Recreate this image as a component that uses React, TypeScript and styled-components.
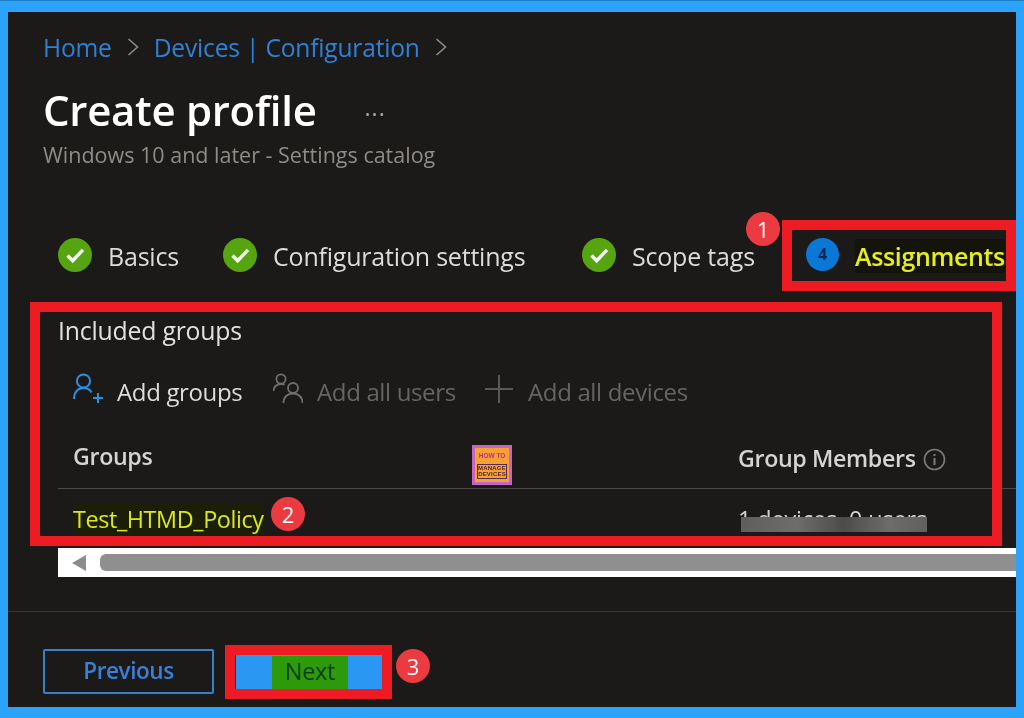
import React from "react";
import styled, { createGlobalStyle } from "styled-components";

const Global = createGlobalStyle`
  html, body { margin: 0; padding: 0; background: #2ba3fa; }
  #root { width: 1024px; height: 718px; overflow: hidden; }
  *, *::before, *::after { box-sizing: border-box; }
`;

const Frame = styled.div`
  width: 1024px;
  height: 718px;
  padding: 11px 8px 11px 8px;
  background: #2ba3fa;
  border-top: 1px solid #1d7fc4;
  font-family: "Open Sans", "Noto Sans", sans-serif;
  overflow: hidden;
  filter: blur(0.35px);
`;

const Panel = styled.main`
  height: 100%;
  background: #1b1a19;
  display: flex;
  flex-direction: column;
  overflow: hidden;
`;

const Header = styled.header`
  padding: 20px 0 0 35px;
  display: flex;
  flex-direction: column;
`;

const Breadcrumb = styled.nav`
  display: flex;
  align-items: center;
  height: 30px;
  font-size: 24.6px;
  color: #2f80d8;
  gap: 14px;
`;

const Crumb = styled.span`
  letter-spacing: -0.2px;
  white-space: nowrap;
`;

const Chevron = styled.svg`
  width: 12px;
  height: 18px;
  fill: none;
  stroke: #8c8a88;
  stroke-width: 1.6;
  margin: 0 1px;
`;

const TitleRow = styled.div`
  display: flex;
  align-items: center;
  height: 50px;
  margin-top: 23px;
`;

const Title = styled.h1`
  margin: 0;
  font-size: 42px;
  font-weight: 600;
  color: #fff;
  line-height: 50px;
  letter-spacing: -0.3px;
  white-space: nowrap;
`;

const More = styled.span`
  margin-left: 48px;
  margin-bottom: 6px;
  color: #a8a6a4;
  font-size: 23px;
  line-height: 20px;
  letter-spacing: 1px;
`;

const Subtitle = styled.p`
  margin: 5px 0 0;
  height: 30px;
  line-height: 30px;
  font-size: 21.5px;
  color: #8f8b87;
  white-space: nowrap;
`;

const Steps = styled.ol`
  list-style: none;
  margin: 66px 0 0;
  padding: 0 0 0 50px;
  height: 40px;
  display: flex;
  align-items: center;
`;

const Step = styled.li<{ $width: number }>`
  display: flex;
  align-items: center;
  width: ${(p) => p.$width}px;
  gap: 16px;
  font-size: 25px;
  line-height: 34px;
  color: #dedcda;
  letter-spacing: -0.2px;
  white-space: nowrap;
`;

const CheckDisc = styled.svg`
  width: 34px;
  height: 34px;
  flex: none;
  margin-top: -3px;
`;

const ActiveStep = styled.li`
  position: relative;
  margin-left: 49px;
  display: flex;
  align-items: center;
  gap: 16px;
  white-space: nowrap;
  &::after {
    content: "";
    position: absolute;
    left: -24px;
    top: -19px;
    width: 234px;
    height: 71px;
    border: 10px solid #ed1c24;
  }
`;

const StepNumber = styled.span`
  width: 33px;
  height: 33px;
  border-radius: 50%;
  flex: none;
  margin-top: -4px;
  background: #0a78d7;
  color: #072a50;
  font-size: 16px;
  font-weight: 700;
  display: flex;
  align-items: center;
  justify-content: center;
`;

const ActiveLabel = styled.span`
  font-size: 25px;
  line-height: 34px;
  font-weight: 600;
  color: #e6ee20;
  background: #14140a;
  letter-spacing: -0.35px;
`;

const Badge = styled.span<{ $x: number; $y: number }>`
  position: absolute;
  left: ${(p) => p.$x}px;
  top: ${(p) => p.$y}px;
  width: 34px;
  height: 34px;
  border-radius: 50%;
  background: #ec3a41;
  color: #fff;
  font-size: 22px;
  display: flex;
  align-items: center;
  justify-content: center;
  z-index: 2;
`;

const GroupsSection = styled.section`
  position: relative;
  margin-top: 39px;
  padding-left: 50px;
  &::after {
    content: "";
    position: absolute;
    left: 22px;
    top: -13px;
    width: 972px;
    height: 244px;
    border: 10px solid #ed1c24;
    pointer-events: none;
  }
`;

const SectionTitle = styled.h2`
  margin: 0;
  height: 30px;
  line-height: 30px;
  font-size: 24.8px;
  font-weight: 400;
  color: #e2e0de;
  letter-spacing: -0.2px;
  white-space: nowrap;
`;

const Toolbar = styled.div`
  display: flex;
  align-items: center;
  height: 40px;
  margin-top: 26px;
  padding-left: 15px;
`;

const ToolButton = styled.span<{ $disabled?: boolean; $width: number }>`
  display: flex;
  align-items: center;
  width: ${(p) => p.$width}px;
  gap: 14px;
  font-size: 24px;
  letter-spacing: -0.35px;
  white-space: nowrap;
  color: ${(p) => (p.$disabled ? "#666564" : "#dedcda")};
`;

const ToolIcon = styled.svg`
  width: 30px;
  height: 32px;
  flex: none;
  fill: none;
  margin-top: -4px;
`;

const TableHead = styled.div`
  display: flex;
  align-items: flex-start;
  height: 49px;
  margin-top: 29px;
  padding-left: 15px;
  border-bottom: 1px solid #4a4948;
`;

const HeadCell = styled.span<{ $width?: number; $offset?: number }>`
  width: ${(p) => (p.$width ? `${p.$width}px` : "auto")};
  margin-top: ${(p) => p.$offset ?? 0}px;
  font-size: 23.2px;
  line-height: 32px;
  font-weight: 600;
  color: #d6d4d2;
  letter-spacing: -0.35px;
  white-space: nowrap;
`;

const Logo = styled.div`
  width: 40px;
  height: 40px;
  margin-right: 226px;
  margin-top: 5px;
  background: #f6a233;
  border: 3px solid #c566c4;
  display: flex;
  flex-direction: column;
  align-items: center;
  justify-content: center;
  font-family: "Liberation Sans", sans-serif;
  font-weight: 700;
`;

const LogoTop = styled.span`
  font-size: 6.5px;
  line-height: 8px;
  color: #c02a9a;
  margin-bottom: 4px;
  white-space: nowrap;
`;

const LogoBottom = styled.span`
  font-size: 6px;
  line-height: 6.5px;
  color: #4a1e3c;
  border: 1px solid #5a2a50;
  text-align: center;
  white-space: nowrap;
  letter-spacing: 0.2px;
`;

const InfoIcon = styled.svg`
  width: 23px;
  height: 23px;
  margin-left: 7px;
  vertical-align: -4px;
  fill: none;
  stroke: #7c7a78;
`;

const Row = styled.div`
  display: flex;
  align-items: center;
  height: 59px;
  padding-left: 15px;
  font-size: 23.4px;
`;

const GroupName = styled.span`
  position: relative;
  width: 665px;
  white-space: nowrap;
`;

const GroupLink = styled.span`
  color: #dce81c;
  background: #1c1f08;
  letter-spacing: -0.4px;
`;

const Members = styled.span`
  position: relative;
  color: #d6d4d2;
  white-space: nowrap;
  letter-spacing: -0.1px;
`;

const Redaction = styled.i`
  position: absolute;
  left: 3px;
  top: 14px;
  width: 186px;
  height: 15px;
  background: linear-gradient(90deg, #5f5e5c, #6e6d6b 30%, #4d4c4a 55%, #6d6c6a 80%, #605f5d);
  filter: blur(0.6px);
`;

const Scrollbar = styled.div`
  display: flex;
  align-items: center;
  height: 29px;
  background: #fff;
  padding: 0 0 0 14px;
  gap: 14px;
`;

const ScrollArrow = styled.svg`
  width: 14px;
  height: 16px;
  fill: #8d8d8d;
  flex: none;
`;

const ScrollThumb = styled.div`
  flex: 1;
  height: 17px;
  background: #8f8f8f;
  border-radius: 6px 0 0 6px;
`;

const Footer = styled.footer`
  margin-top: 34px;
  border-top: 1px solid #383736;
  flex: 1;
  display: flex;
  align-items: flex-start;
  padding: 37px 0 0 35px;
`;

const SecondaryButton = styled.span`
  width: 171px;
  height: 45px;
  padding-bottom: 2px;
  border: 2px solid #3583c4;
  border-radius: 2px;
  color: #3a80d8;
  font-size: 22.5px;
  font-weight: 600;
  letter-spacing: -0.4px;
  display: flex;
  align-items: center;
  justify-content: center;
`;

const PrimaryButton = styled.span`
  position: relative;
  width: 147px;
  height: 35px;
  margin: 6px 0 0 22px;
  background: #2a98f2;
  display: flex;
  align-items: center;
  justify-content: center;
  &::after {
    content: "";
    position: absolute;
    left: -11px;
    top: -10px;
    width: 167px;
    height: 54px;
    border: 10px solid #ed1c24;
  }
`;

const NextLabel = styled.span`
  width: 76px;
  height: 34px;
  margin-left: 1px;
  padding-bottom: 4px;
  background: #2c9a0a;
  color: #0b3d10;
  font-size: 23.5px;
  letter-spacing: -0.3px;
  display: flex;
  align-items: center;
  justify-content: center;
`;

const Check = () => (
  <CheckDisc viewBox="0 0 34 34">
    <circle cx="17" cy="17" r="17" fill="#57a411" />
    <path d="M9.5 17.5l5.2 5.2L25 11.8" fill="none" stroke="#f4f8ee" strokeWidth="3.4" />
  </CheckDisc>
);

const Sep = () => (
  <Chevron viewBox="0 0 12 18">
    <path d="M1.500 1l9 8-9 8" />
  </Chevron>
);

export default function App() {
  return (
    <Frame>
      <Global />
      <Panel>
        <Header>
          <Breadcrumb>
            <Crumb>Home</Crumb>
            <Sep />
            <Crumb>Devices | Configuration</Crumb>
            <Sep />
          </Breadcrumb>
          <TitleRow>
            <Title>Create profile</Title>
            <More>...</More>
          </TitleRow>
          <Subtitle>Windows 10 and later - Settings catalog</Subtitle>
        </Header>

        <Steps>
          <Step $width={165}>
            <Check />
            Basics
          </Step>
          <Step $width={359}>
            <Check />
            Configuration settings
          </Step>
          <Step $width={175}>
            <Check />
            Scope tags
          </Step>
          <ActiveStep>
            <Badge $x={-60} $y={-27}>1</Badge>
            <StepNumber>4</StepNumber>
            <ActiveLabel>Assignments</ActiveLabel>
          </ActiveStep>
        </Steps>

        <GroupsSection>
          <SectionTitle>Included groups</SectionTitle>
          <Toolbar>
            <ToolButton $width={200}>
              <ToolIcon viewBox="0 0 30 32">
                <circle cx="10.5" cy="8" r="6.6" stroke="#2f8fe0" strokeWidth="2" />
                <path d="M1 26c0-7 4-11 9.5-11 3.5 0 6.5 1.5 8 4.5" stroke="#2f8fe0" strokeWidth="2" />
                <path d="M25 20v10M20 25h10" stroke="#2f8fe0" strokeWidth="2" />
              </ToolIcon>
              Add groups
            </ToolButton>
            <ToolButton $disabled $width={211}>
              <ToolIcon viewBox="0 0 30 32">
                <circle cx="8" cy="6" r="4.6" stroke="#706f6e" strokeWidth="1.8" />
                <path d="M0.5 18c0-4 3-7 7.5-7 1.4 0 2.6.3 3.6.8" stroke="#706f6e" strokeWidth="1.8" />
                <circle cx="20" cy="15" r="5" stroke="#706f6e" strokeWidth="1.8" />
                <path d="M10.5 30c0-6 4-9.500 9.500-9.500s9.500 3.500 9.500 9.500" stroke="#706f6e" strokeWidth="1.8" />
              </ToolIcon>
              Add all users
            </ToolButton>
            <ToolButton $disabled $width={210}>
              <ToolIcon viewBox="0 0 30 32">
                <path d="M15 2v28M1 16h28" stroke="#5a5958" strokeWidth="2" />
              </ToolIcon>
              Add all devices
            </ToolButton>
          </Toolbar>
          <TableHead>
            <HeadCell $width={399}>Groups</HeadCell>
            <Logo>
              <LogoTop>HOW TO</LogoTop>
              <LogoBottom>
                MANAGE
                <br />
                DEVICES
              </LogoBottom>
            </Logo>
            <HeadCell $offset={2}>
              Group Members
              <InfoIcon viewBox="0 0 23 23">
                <circle cx="11.5" cy="11.5" r="10" strokeWidth="1.6" />
                <path d="M11.5 10v7M11.500 6v2" strokeWidth="2" />
              </InfoIcon>
            </HeadCell>
          </TableHead>
          <Row>
            <GroupName>
              <GroupLink>Test_HTMD_Policy</GroupLink>
              <Badge $x={198} $y={-6}>2</Badge>
            </GroupName>
            <Members>
              1 devices, 0 users
              <Redaction />
            </Members>
          </Row>
          <Scrollbar>
            <ScrollArrow viewBox="0 0 14 16">
              <path d="M14 0v16L0 8z" />
            </ScrollArrow>
            <ScrollThumb />
          </Scrollbar>
        </GroupsSection>

        <Footer>
          <SecondaryButton>Previous</SecondaryButton>
          <PrimaryButton>
            <Badge $x={160} $y={-6}>3</Badge>
            <NextLabel>Next</NextLabel>
          </PrimaryButton>
        </Footer>
      </Panel>
    </Frame>
  );
}
